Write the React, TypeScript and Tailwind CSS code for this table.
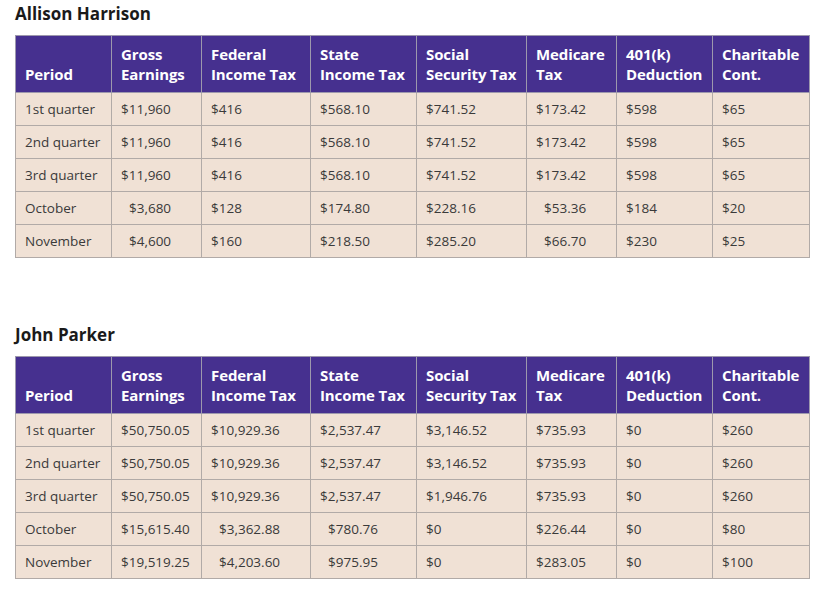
import React from "react";

type Row = { cells: string[]; indent: number[] };

const headers: [string, string][] = [
  ["", "Period"],
  ["Gross", "Earnings"],
  ["Federal", "Income Tax"],
  ["State", "Income Tax"],
  ["Social", "Security Tax"],
  ["Medicare", "Tax"],
  ["401(k)", "Deduction"],
  ["Charitable", "Cont."],
];

const widths = [96, 90, 109, 106, 110, 90, 96, 97];

const allison: Row[] = [
  { cells: ["1st quarter", "$11,960", "$416", "$568.10", "$741.52", "$173.42", "$598", "$65"], indent: [] },
  { cells: ["2nd quarter", "$11,960", "$416", "$568.10", "$741.52", "$173.42", "$598", "$65"], indent: [] },
  { cells: ["3rd quarter", "$11,960", "$416", "$568.10", "$741.52", "$173.42", "$598", "$65"], indent: [] },
  { cells: ["October", "$3,680", "$128", "$174.80", "$228.16", "$53.36", "$184", "$20"], indent: [1, 5] },
  { cells: ["November", "$4,600", "$160", "$218.50", "$285.20", "$66.70", "$230", "$25"], indent: [1, 5] },
];

const john: Row[] = [
  { cells: ["1st quarter", "$50,750.05", "$10,929.36", "$2,537.47", "$3,146.52", "$735.93", "$0", "$260"], indent: [] },
  { cells: ["2nd quarter", "$50,750.05", "$10,929.36", "$2,537.47", "$3,146.52", "$735.93", "$0", "$260"], indent: [] },
  { cells: ["3rd quarter", "$50,750.05", "$10,929.36", "$2,537.47", "$1,946.76", "$735.93", "$0", "$260"], indent: [] },
  { cells: ["October", "$15,615.40", "$3,362.88", "$780.76", "$0", "$226.44", "$0", "$80"], indent: [2, 3] },
  { cells: ["November", "$19,519.25", "$4,203.60", "$975.95", "$0", "$283.05", "$0", "$100"], indent: [2, 3] },
];

function PayTable({ rows }: { rows: Row[] }) {
  return (
    <table className="table-fixed border-collapse w-[795px] border border-[#aaa5a5]">
      <colgroup>
        {widths.map((w, i) => (
          <col key={i} style={{ width: w }} />
        ))}
      </colgroup>
      <thead>
        <tr className="h-[57px] bg-[#46308f]">
          {headers.map(([a, b], i) => (
            <th
              key={i}
              className="border border-[#9d98ad] pl-[9px] pr-[2px] pb-[8px] pt-[6px] align-bottom text-left font-bold text-[15px] leading-[20px] tracking-[-0.1px] text-white whitespace-nowrap"
            >
              {a && <div>{a}</div>}
              <div>{b}</div>
            </th>
          ))}
        </tr>
      </thead>
      <tbody>
        {rows.map((r, ri) => (
          <tr key={ri} className="h-[33px] bg-[#f0e1d5]">
            {r.cells.map((c, ci) => (
              <td
                key={ci}
                className={
                  "border border-[#b1aaa7] p-0 align-middle text-[13.5px] leading-[20px] text-[#3a3a3a] whitespace-nowrap " +
                  (r.indent.includes(ci) ? "pl-[17px]" : "pl-[9px]")
                }
              >
                {c}
              </td>
            ))}
          </tr>
        ))}
      </tbody>
    </table>
  );
}

export default function App() {
  return (
    <div
      className="w-[823px] h-[589px] bg-white pl-[15px] overflow-hidden"
      style={{ fontFamily: '"Open Sans", "Noto Sans", sans-serif' }}
    >
      <div className="text-[17px] font-bold leading-[28px] text-[#1a1a1a] mb-[7px]">Allison Harrison</div>
      <PayTable rows={allison} />
      <div className="text-[17px] font-bold leading-[28px] text-[#1a1a1a] mt-[63px] mb-[7px]">John Parker</div>
      <PayTable rows={john} />
    </div>
  );
}
